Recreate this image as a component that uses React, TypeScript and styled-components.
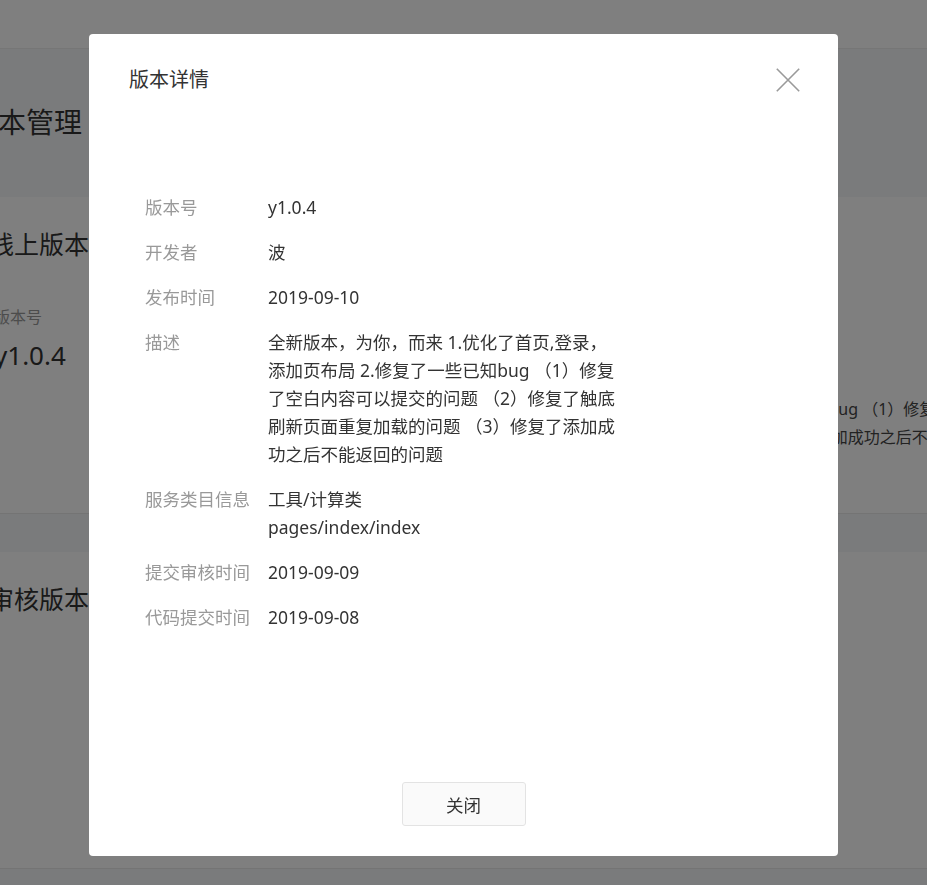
import React from 'react';
import styled, { createGlobalStyle } from 'styled-components';

const GlobalStyle = createGlobalStyle`
  html, body {
    margin: 0;
    padding: 0;
    width: 100%;
    height: 100%;
    overflow: hidden;
  }
  body {
    font-family: "Noto Sans", "Noto Sans CJK SC", sans-serif;
    background: #f5f6f8;
    color: #333;
  }
  * { box-sizing: border-box; }
`;

const Page = styled.div`
  width: 927px;
  height: 885px;
  overflow: hidden;
  background: #f5f6f8;
  display: flex;
  flex-direction: column;
`;

const TopBar = styled.header`
  height: 49px;
  flex-shrink: 0;
  background: #fff;
  border-bottom: 1px solid #ececec;
`;

const Main = styled.main`
  margin-left: -60px;
  width: 1120px;
  padding-top: 53px;
  display: flex;
  flex-direction: column;
`;

const PageTitle = styled.h1`
  margin: 0 0 0 30px;
  font-size: 28px;
  font-weight: 400;
  line-height: 40px;
  color: #333;
`;

const Card = styled.section<{ $first?: boolean }>`
  margin-top: ${(p) => (p.$first ? '55px' : '38px')};
  height: 317px;
  background: #fff;
  border-bottom: 1px solid #e9e9e9;
  padding: 30px 0 0 49px;
`;

const CardTitle = styled.h2`
  margin: 0;
  font-size: 25px;
  font-weight: 400;
  line-height: 34px;
  color: #333;
`;

const CardBody = styled.div`
  margin-top: 42px;
  display: flex;
`;

const VersionBlock = styled.div`
  width: 241px;
  padding-left: 5px;
  flex-shrink: 0;
  display: flex;
  flex-direction: column;
`;

const VersionLabel = styled.div`
  font-size: 16px;
  line-height: 28px;
  color: #999;
`;

const VersionValue = styled.div`
  margin-top: 6px;
  font-size: 26px;
  line-height: 36px;
  color: #333;
`;

const MetaList = styled.div`
  display: flex;
  flex-direction: column;
  gap: 18px;
`;

const MetaRow = styled.div`
  display: flex;
  font-size: 16px;
  line-height: 28px;
`;

const MetaLabel = styled.div`
  width: 79px;
  flex-shrink: 0;
  color: #999;
`;

const MetaValue = styled.div`
  width: 715px;
  color: #444;
  display: -webkit-box;
  -webkit-line-clamp: 2;
  -webkit-box-orient: vertical;
  overflow: hidden;
`;

/* ---------- Modal ---------- */

const Overlay = styled.div`
  position: fixed;
  inset: 0;
  background: rgba(0, 0, 0, 0.5);
  display: flex;
  justify-content: center;
  align-items: flex-start;
  padding-top: 34px;
`;

const Dialog = styled.div`
  width: 749px;
  height: 822px;
  background: #fff;
  border-radius: 4px;
  display: flex;
  flex-direction: column;
`;

const DialogHeader = styled.div`
  display: flex;
  align-items: center;
  justify-content: space-between;
  padding: 32px 38px 0 40px;
`;

const DialogTitle = styled.h3`
  margin: 0;
  font-size: 20px;
  font-weight: 400;
  line-height: 28px;
  color: #333;
`;

const CloseButton = styled.button`
  width: 24px;
  height: 24px;
  padding: 0;
  border: none;
  background: transparent;
  cursor: pointer;
  display: flex;
  align-items: center;
  justify-content: center;
`;

const DialogBody = styled.div`
  padding: 99px 0 0 56px;
  display: flex;
  flex-direction: column;
  gap: 17px;
`;

const DetailRow = styled.div`
  display: flex;
  font-size: 17.5px;
  line-height: 28px;
`;

const DetailLabel = styled.div`
  width: 123px;
  flex-shrink: 0;
  color: #999;
`;

const DetailValue = styled.div`
  width: 354px;
  color: #333;
  word-break: break-all;
`;

const DialogFooter = styled.div`
  margin-top: auto;
  padding-bottom: 30px;
  display: flex;
  justify-content: center;
`;

const FooterButton = styled.button`
  width: 124px;
  height: 44px;
  border: 1px solid #e3e3e3;
  border-radius: 3px;
  background: #fafafa;
  font-family: inherit;
  font-size: 17.5px;
  color: #333;
  cursor: pointer;
`;

const DESCRIPTION =
  '全新版本，为你，而来 1.优化了首页,登录，添加页布局 2.修复了一些已知bug （1）修复了空白内容可以提交的问题 （2）修复了触底刷新页面重复加载的问题 （3）修复了添加成功之后不能返回的问题';

const details: { label: string; value: React.ReactNode }[] = [
  { label: '版本号', value: 'y1.0.4' },
  { label: '开发者', value: '波' },
  { label: '发布时间', value: '2019-09-10' },
  { label: '描述', value: DESCRIPTION },
  {
    label: '服务类目信息',
    value: (
      <>
        工具/计算类
        <br />
        pages/index/index
      </>
    ),
  },
  { label: '提交审核时间', value: '2019-09-09' },
  { label: '代码提交时间', value: '2019-09-08' },
];

const CloseIcon = () => (
  <svg width="24" height="24" viewBox="0 0 24 24" fill="none">
    <path d="M0.8 0.8 L23.2 23.2 M23.2 0.8 L0.8 23.2" stroke="#9a9a9a" strokeWidth="1.6" />
  </svg>
);

export default function App() {
  return (
    <>
      <GlobalStyle />
      <Page>
        <TopBar />
        <Main>
          <PageTitle>版本管理</PageTitle>
          <Card $first>
            <CardTitle>线上版本</CardTitle>
            <CardBody>
              <VersionBlock>
                <VersionLabel>版本号</VersionLabel>
                <VersionValue>y1.0.4</VersionValue>
              </VersionBlock>
              <MetaList>
                <MetaRow>
                  <MetaLabel>开发者</MetaLabel>
                  <MetaValue>波</MetaValue>
                </MetaRow>
                <MetaRow>
                  <MetaLabel>发布时间</MetaLabel>
                  <MetaValue>2019-09-10</MetaValue>
                </MetaRow>
                <MetaRow>
                  <MetaLabel>描述</MetaLabel>
                  <MetaValue>{DESCRIPTION}</MetaValue>
                </MetaRow>
              </MetaList>
            </CardBody>
          </Card>
          <Card>
            <CardTitle>审核版本</CardTitle>
          </Card>
        </Main>
      </Page>
      <Overlay>
        <Dialog>
          <DialogHeader>
            <DialogTitle>版本详情</DialogTitle>
            <CloseButton aria-label="关闭">
              <CloseIcon />
            </CloseButton>
          </DialogHeader>
          <DialogBody>
            {details.map((d) => (
              <DetailRow key={d.label}>
                <DetailLabel>{d.label}</DetailLabel>
                <DetailValue>{d.value}</DetailValue>
              </DetailRow>
            ))}
          </DialogBody>
          <DialogFooter>
            <FooterButton>关闭</FooterButton>
          </DialogFooter>
        </Dialog>
      </Overlay>
    </>
  );
}
